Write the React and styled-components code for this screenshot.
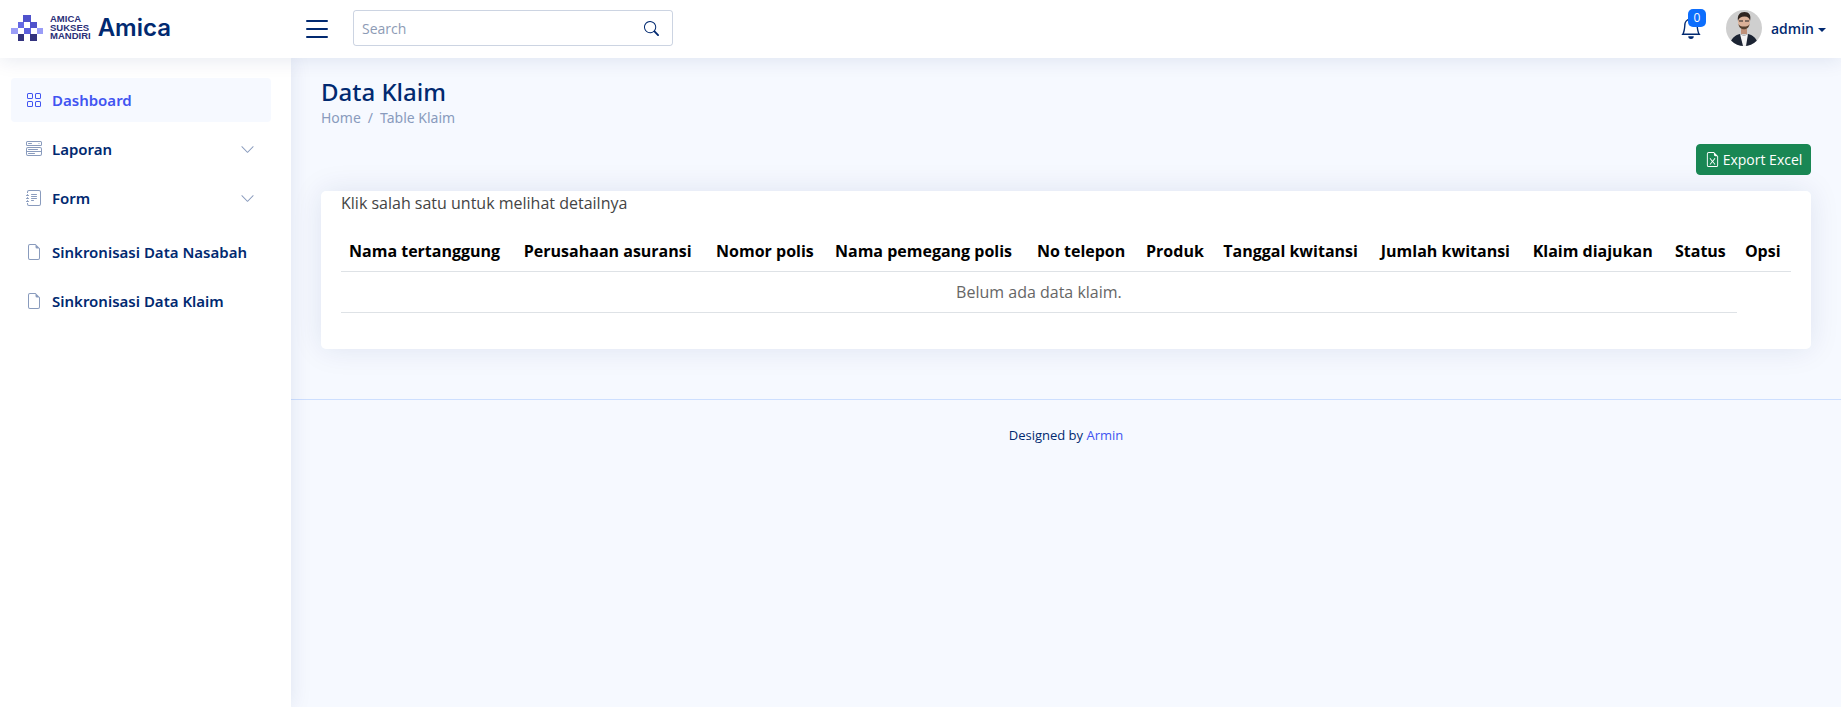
import React from 'react'
import styled, { createGlobalStyle } from 'styled-components'
import {
  BsGrid,
  BsMenuButtonWide,
  BsJournalText,
  BsFileEarmark,
  BsChevronDown,
  BsList,
  BsSearch,
  BsBell,
  BsFileEarmarkExcel
} from 'react-icons/bs'

const GlobalStyle = createGlobalStyle`
  html, body {
    margin: 0;
    padding: 0;
  }
  body {
    background: #f6f9ff;
    color: #444444;
    font-family: "Open Sans", sans-serif;
  }
  * {
    box-sizing: border-box;
  }
`

const Page = styled.div`
  display: flex;
  flex-direction: column;
  height: 707px;
  overflow: hidden;
`

const Header = styled.header`
  height: 58px;
  flex: none;
  display: flex;
  align-items: center;
  background: #fff;
  box-shadow: 0 2px 20px rgba(1, 41, 112, 0.1);
  position: relative;
  z-index: 2;
  padding: 0 15px 2px 0;
`

const LogoArea = styled.div`
  width: 301px;
  flex: none;
  display: flex;
  align-items: center;
  padding-left: 11px;
`

const LogoLines = styled.div`
  margin-left: 7px;
  font-family: "Liberation Sans", sans-serif;
  font-size: 9.5px;
  font-weight: 700;
  line-height: 8.7px;
  color: #2a2f78;
`

const LogoWord = styled.span`
  margin-left: 7px;
  font-family: "Inter", sans-serif;
  font-size: 24px;
  font-weight: 600;
  line-height: 1;
  color: #012970;
`

const MenuButton = styled.div`
  width: 32px;
  flex: none;
  display: flex;
  margin-top: 2px;
  color: #012970;
  font-size: 32px;
`

const SearchBox = styled.div`
  margin-left: 20px;
  width: 320px;
  height: 36px;
  display: flex;
  align-items: center;
  justify-content: space-between;
  border: 1px solid rgba(1, 41, 112, 0.2);
  border-radius: 3px;
  padding: 0 13px 0 8px;
  font-size: 14px;
  color: #8d9bb5;
  svg {
    color: #012970;
    font-size: 15px;
  }
`

const HeaderRight = styled.div`
  margin-left: auto;
  display: flex;
  align-items: center;
`

const BellWrap = styled.div`
  position: relative;
  display: flex;
  color: #012970;
  font-size: 22px;
  margin-right: 24px;
`

const Badge = styled.span`
  position: absolute;
  top: -8px;
  right: -4px;
  min-width: 18px;
  height: 18px;
  border-radius: 5px;
  background: #0d6efd;
  color: #fff;
  font-size: 12px;
  line-height: 18px;
  text-align: center;
`

const Avatar = styled.svg`
  width: 36px;
  height: 36px;
  border-radius: 50%;
  flex: none;
`

const UserName = styled.span`
  margin-left: 9px;
  font-size: 14px;
  font-weight: 600;
  color: #012970;
  &::after {
    content: "";
    display: inline-block;
    margin-left: 4px;
    vertical-align: 2px;
    border-top: 4px solid #012970;
    border-left: 4px solid transparent;
    border-right: 4px solid transparent;
  }
`

const Body = styled.div`
  flex: 1;
  display: flex;
  min-height: 0;
`

const Sidebar = styled.aside`
  width: 291px;
  flex: none;
  background: #fff;
  padding: 20px 20px 20px 11px;
  box-shadow: 0 0 20px rgba(1, 41, 112, 0.1);
  position: relative;
  z-index: 1;
`

const NavList = styled.nav`
  display: flex;
  flex-direction: column;
`

const NavItem = styled.div`
  height: 44px;
  display: flex;
  align-items: center;
  padding: 0 16px 0 15px;
  margin-bottom: ${p => p.$gap}px;
  border-radius: 4px;
  font-family: "Noto Sans", sans-serif;
  font-size: 15px;
  font-weight: 600;
  color: ${p => (p.$active ? '#4154f1' : '#012970')};
  background: ${p => (p.$active ? '#f6f9ff' : 'transparent')};
  > svg:first-child {
    font-size: 16px;
    margin-right: 10px;
    color: ${p => (p.$active ? '#4154f1' : '#899bbd')};
  }
`

const Chevron = styled(BsChevronDown)`
  margin-left: auto;
  color: #899bbd;
  font-size: 15px;
`

const Main = styled.div`
  flex: 1;
  min-width: 0;
  display: flex;
  flex-direction: column;
`

const Content = styled.main`
  padding: 19px 30px 0;
`

const Title = styled.h1`
  margin: 0;
  font-family: "Noto Sans", sans-serif;
  font-size: 24px;
  font-weight: 500;
  line-height: 29px;
  color: #012970;
`

const Breadcrumb = styled.div`
  margin-top: 3px;
  display: flex;
  gap: 7px;
  font-family: "Noto Sans", sans-serif;
  font-size: 14px;
  line-height: 17px;
  color: #899bbd;
`

const Toolbar = styled.div`
  margin-top: 18px;
  display: flex;
  justify-content: flex-end;
`

const ExportButton = styled.button`
  width: 115px;
  height: 31px;
  display: flex;
  align-items: center;
  justify-content: center;
  gap: 3px;
  padding: 0;
  border: 1px solid #198754;
  border-radius: 4px;
  background: #198754;
  color: #fff;
  font-family: "Open Sans", sans-serif;
  font-size: 14px;
  svg {
    font-size: 15px;
  }
`

const Card = styled.section`
  margin-top: 16px;
  height: 158px;
  background: #fff;
  border-radius: 5px;
  padding: 0 20px;
  box-shadow: 0 0 30px rgba(1, 41, 112, 0.1);
`

const Hint = styled.p`
  margin: 0;
  font-size: 16px;
  line-height: 24px;
  color: #444;
  height: 24px;
`

const Table = styled.table`
  margin-top: 16px;
  width: 100%;
  border-collapse: collapse;
`

const Th = styled.th`
  padding: 8px;
  height: 40px;
  font-size: 16px;
  font-weight: 700;
  line-height: 24px;
  color: #000;
  text-align: left;
  white-space: nowrap;
  border-bottom: 1px solid #dee2e6;
`

const EmptyCell = styled.td`
  padding: 8px;
  height: 41px;
  font-size: 16px;
  line-height: 24px;
  text-align: center;
  color: #666;
  border-bottom: 1px solid #dee2e6;
`

const Footer = styled.footer`
  margin-top: 50px;
  padding-top: 25px;
  border-top: 1px solid #cddfff;
  font-size: 13px;
  line-height: 20px;
  text-align: center;
  color: #012970;
`

const FooterLink = styled.span`
  color: #4154f1;
`

const columns = [
  'Nama tertanggung',
  'Perusahaan asuransi',
  'Nomor polis',
  'Nama pemegang polis',
  'No telepon',
  'Produk',
  'Tanggal kwitansi',
  'Jumlah kwitansi',
  'Klaim diajukan',
  'Status',
  'Opsi'
]

function LogoMark() {
  return (
    <svg width="32" height="26" viewBox="0 0 32 26">
      <rect x="12" y="0" width="8" height="7" fill="#4f52cc" />
      <rect x="7" y="7" width="6" height="6" fill="#6569e4" />
      <rect x="19" y="7" width="7" height="6" fill="#4f52cc" />
      <rect x="0" y="13" width="7" height="6" fill="#9a9df7" />
      <rect x="13" y="13" width="7" height="6" fill="#5c60dc" />
      <rect x="26" y="13" width="6" height="6" fill="#9a9df7" />
      <rect x="7" y="19" width="6" height="7" fill="#33337f" />
      <rect x="19" y="19" width="7" height="7" fill="#33337f" />
    </svg>
  )
}

function AvatarPhoto() {
  return (
    <Avatar viewBox="0 0 36 36">
      <rect width="36" height="36" fill="#cfcfcf" />
      <path d="M4 36c0-7 5-11 10-12l4 2 4-2c5 1 10 5 10 12z" fill="#1c2433" />
      <path d="M14 24l3 12h3l2-12-4 2z" fill="#f4f4f4" />
      <rect x="15" y="16" width="6" height="8" fill="#bf9179" />
      <ellipse cx="18" cy="11.5" rx="6" ry="7.5" fill="#dcb198" />
      <path d="M12 11c-1-6 2-9 6.500-9s7 3 5.500 9c-.5-3-2-4.500-5.500-4.500s-6 1.500-6.500 4.500z" fill="#2f241f" />
      <path d="M12.500 14c.5 7 10.500 7 11 0-1 2-2.500 2.500-5.500 2.500s-4.500-.5-5.500-2.500z" fill="#57412f" />
      <path d="M13 11h4m2 0h4" stroke="#222" strokeWidth="1.200" />
    </Avatar>
  )
}

export default function App() {
  return (
    <Page>
      <GlobalStyle />
      <Header>
        <LogoArea>
          <LogoMark />
          <LogoLines>
            AMICA
            <br />
            SUKSES
            <br />
            MANDIRI
          </LogoLines>
          <LogoWord>Amica</LogoWord>
        </LogoArea>
        <MenuButton>
          <BsList />
        </MenuButton>
        <SearchBox>
          Search
          <BsSearch />
        </SearchBox>
        <HeaderRight>
          <BellWrap>
            <BsBell />
            <Badge>0</Badge>
          </BellWrap>
          <AvatarPhoto />
          <UserName>admin</UserName>
        </HeaderRight>
      </Header>
      <Body>
        <Sidebar>
          <NavList>
            <NavItem $active $gap={5}>
              <BsGrid />
              Dashboard
            </NavItem>
            <NavItem $gap={5}>
              <BsMenuButtonWide />
              Laporan
              <Chevron />
            </NavItem>
            <NavItem $gap={10}>
              <BsJournalText />
              Form
              <Chevron />
            </NavItem>
            <NavItem $gap={5}>
              <BsFileEarmark />
              Sinkronisasi Data Nasabah
            </NavItem>
            <NavItem $gap={5}>
              <BsFileEarmark />
              Sinkronisasi Data Klaim
            </NavItem>
          </NavList>
        </Sidebar>
        <Main>
          <Content>
            <Title>Data Klaim</Title>
            <Breadcrumb>
              <span>Home</span>
              <span>/</span>
              <span>Table Klaim</span>
            </Breadcrumb>
            <Toolbar>
              <ExportButton>
                <BsFileEarmarkExcel />
                Export Excel
              </ExportButton>
            </Toolbar>
            <Card>
              <Hint>Klik salah satu untuk melihat detailnya</Hint>
              <Table>
                <thead>
                  <tr>
                    {columns.map(c => (
                      <Th key={c}>{c}</Th>
                    ))}
                  </tr>
                </thead>
                <tbody>
                  <tr>
                    <EmptyCell colSpan={10}>Belum ada data klaim.</EmptyCell>
                  </tr>
                </tbody>
              </Table>
            </Card>
          </Content>
          <Footer>
            Designed by <FooterLink>Armin</FooterLink>
          </Footer>
        </Main>
      </Body>
    </Page>
  )
}
